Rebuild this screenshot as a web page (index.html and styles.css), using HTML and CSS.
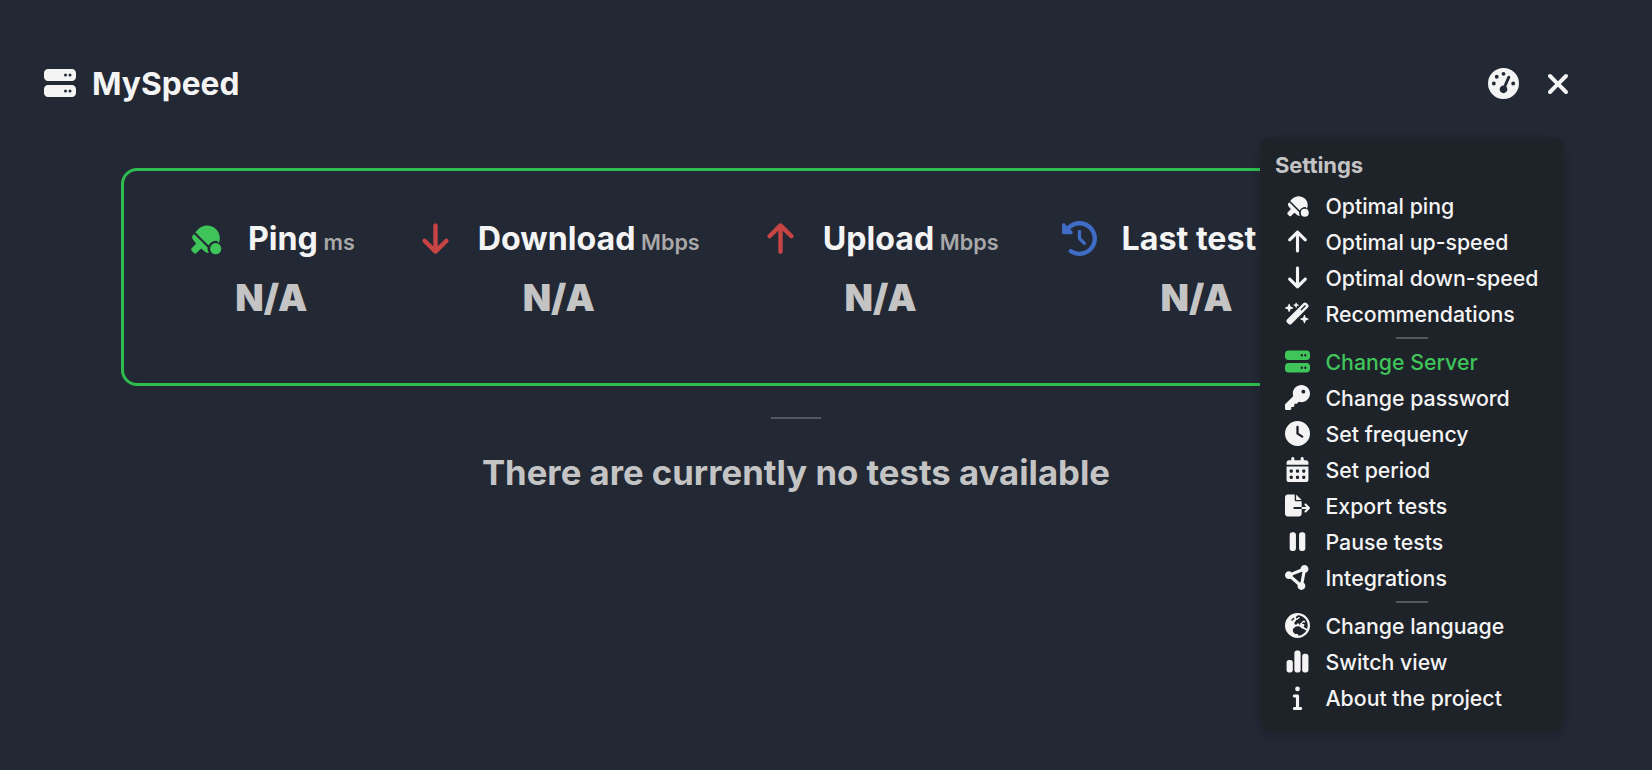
FILE: index.html
```html
<!DOCTYPE html>
<html lang="en">
<head>
<meta charset="utf-8">
<title>MySpeed</title>
<link rel="stylesheet" href="styles.css">
</head>
<body>
<svg class="defs" aria-hidden="true">
<defs>
<symbol id="i-server" viewBox="0 0 512 512"><path d="M64 32C28.7 32 0 60.7 0 96v64c0 35.3 28.7 64 64 64H448c35.3 0 64-28.7 64-64V96c0-35.3-28.7-64-64-64H64zm280 72a24 24 0 1 1 0 48 24 24 0 1 1 0-48zm48 24a24 24 0 1 1 48 0 24 24 0 1 1 -48 0zM64 288c-35.3 0-64 28.7-64 64v64c0 35.3 28.7 64 64 64H448c35.3 0 64-28.7 64-64V352c0-35.3-28.7-64-64-64H64zm280 72a24 24 0 1 1 0 48 24 24 0 1 1 0-48zm48 24a24 24 0 1 1 48 0 24 24 0 1 1 -48 0z"/></symbol>
<symbol id="i-up" viewBox="0 0 512 512"><path transform="translate(64 0)" d="M214.6 41.4c-12.5-12.5-32.8-12.5-45.3 0l-160 160c-12.5 12.5-12.5 32.8 0 45.3s32.8 12.5 45.3 0L160 141.2V448c0 17.7 14.3 32 32 32s32-14.3 32-32V141.2L329.4 246.6c12.5 12.5 32.8 12.5 45.3 0s12.5-32.8 0-45.3l-160-160z"/></symbol>
<symbol id="i-down" viewBox="0 0 512 512"><path transform="translate(64 0)" d="M169.4 470.6c12.5 12.5 32.8 12.5 45.3 0l160-160c12.5-12.5 12.5-32.8 0-45.3s-32.8-12.5-45.3 0L224 370.8V64c0-17.7-14.3-32-32-32s-32 14.3-32 32V370.7L54.6 265.4c-12.5-12.5-32.8-12.5-45.3 0s-12.5 32.8 0 45.3l160 160z"/></symbol>
<symbol id="i-x" viewBox="0 0 384 512"><path d="M342.6 150.6c12.5-12.5 12.5-32.8 0-45.3s-32.8-12.5-45.3 0L192 210.7 86.6 105.4c-12.5-12.5-32.8-12.5-45.3 0s-12.5 32.8 0 45.3L146.7 256 41.4 361.4c-12.5 12.5-12.5 32.8 0 45.3s32.8 12.5 45.3 0L192 301.3 297.4 406.6c12.5 12.5 32.8 12.5 45.3 0s12.5-32.8 0-45.3L237.3 256 342.6 150.6z"/></symbol>
<symbol id="i-gauge" viewBox="0 0 512 512"><path d="M0 256a256 256 0 1 1 512 0A256 256 0 1 1 0 256zM288 96a32 32 0 1 0 -64 0 32 32 0 1 0 64 0zM256 416c35.3 0 64-28.7 64-64c0-17.4-6.9-33.1-18.1-44.6L366 161.7c5.3-12.1-.2-26.3-12.3-31.6s-26.3 .2-31.6 12.3L257.9 288c-.6 0-1.3 0-1.9 0c-35.3 0-64 28.7-64 64s28.7 64 64 64zM176 144a32 32 0 1 0 -64 0 32 32 0 1 0 64 0zM96 288a32 32 0 1 0 0-64 32 32 0 1 0 0 64zm352-32a32 32 0 1 0 -64 0 32 32 0 1 0 64 0z"/></symbol>
<symbol id="i-ping" viewBox="0 0 512 512"><path d="M416 288c-50.1 0-93.6 28.8-114.6 70.8L106 163l43-43c72-72 190-72 262 0c56 56 69 138 39 206C436 297 426 288 416 288z"/><path d="M88 190L287 389c-1 9-1 18 0 27c2 20 9 38 20 52c-20 2-40-5-58-19l-56-46-70 66c-10 10-26 10-36 0l-33-33c-10-10-10-26 0-36l66-70-46-56c-20-26-21-58 14-84z"/><circle cx="405" cy="405" r="82"/></symbol>
<symbol id="i-wand" viewBox="0 0 576 512"><path d="M234.7 42.7L197 56.8c-3 1.1-5 4-5 7.2s2 6.1 5 7.2l37.7 14.1L248.8 123c1.1 3 4 5 7.2 5s6.1-2 7.2-5l14.1-37.7L315 71.2c3-1.1 5-4 5-7.2s-2-6.1-5-7.2L277.3 42.7 263.2 5c-1.1-3-4-5-7.2-5s-6.1 2-7.2 5L234.7 42.7zM46.1 395.4c-18.7 18.7-18.7 49.1 0 67.9l34.6 34.6c18.7 18.7 49.1 18.7 67.9 0L529.9 116.5c18.7-18.7 18.7-49.1 0-67.9L495.3 14.1c-18.7-18.7-49.1-18.7-67.9 0L46.1 395.4zM484.6 82.6l-105 105-23.3-23.3 105-105 23.3 23.3zM7.5 117.2C3 118.9 0 123.2 0 128s3 9.1 7.5 10.8L64 160l21.2 56.5c1.7 4.5 6 7.5 10.8 7.5s9.1-3 10.8-7.5L128 160l56.5-21.2c4.5-1.7 7.5-6 7.5-10.8s-3-9.1-7.5-10.8L128 96 106.8 39.5C105.1 35 100.8 32 96 32s-9.1 3-10.8 7.5L64 96 7.5 117.2zm352 256c-4.5 1.7-7.5 6-7.5 10.8s3 9.1 7.5 10.8L416 416l21.2 56.5c1.7 4.5 6 7.5 10.8 7.5s9.1-3 10.8-7.5L480 416l56.5-21.2c4.5-1.7 7.5-6 7.5-10.8s-3-9.1-7.5-10.8L480 352l-21.2-56.5c-1.7-4.5-6-7.5-10.8-7.5s-9.1 3-10.8 7.5L416 352l-56.5 21.2z"/></symbol>
<symbol id="i-key" viewBox="0 0 512 512"><path d="M336 352c97.2 0 176-78.8 176-176S433.2 0 336 0S160 78.8 160 176c0 18.7 2.9 36.8 8.3 53.7L7 391c-4.5 4.5-7 10.6-7 17v80c0 13.3 10.7 24 24 24h80c13.3 0 24-10.7 24-24V448h40c13.3 0 24-10.7 24-24V384h40c6.4 0 12.5-2.5 17-7l33.3-33.3c16.9 5.4 35 8.3 53.7 8.3zM376 96a40 40 0 1 1 0 80 40 40 0 1 1 0-80z"/></symbol>
<symbol id="i-clock" viewBox="0 0 512 512"><path d="M256 0a256 256 0 1 1 0 512A256 256 0 1 1 256 0zM232 120V256c0 8 4 15.5 10.7 20l96 64c11 7.4 25.9 4.4 33.3-6.7s4.4-25.9-6.7-33.3L280 243.2V120c0-13.3-10.7-24-24-24s-24 10.7-24 24z"/></symbol>
<symbol id="i-cal" viewBox="0 0 448 512"><path d="M128 0c17.7 0 32 14.3 32 32V64H288V32c0-17.7 14.3-32 32-32s32 14.3 32 32V64h48c26.5 0 48 21.5 48 48v48H0V112C0 85.5 21.5 64 48 64H96V32c0-17.7 14.3-32 32-32zM0 192H448V464c0 26.5-21.5 48-48 48H48c-26.5 0-48-21.5-48-48V192zm64 80v32c0 8.8 7.2 16 16 16h32c8.8 0 16-7.2 16-16V272c0-8.8-7.2-16-16-16H80c-8.8 0-16 7.2-16 16zm128 0v32c0 8.8 7.2 16 16 16h32c8.8 0 16-7.2 16-16V272c0-8.8-7.2-16-16-16H208c-8.8 0-16 7.2-16 16zm144-16c-8.8 0-16 7.2-16 16v32c0 8.8 7.2 16 16 16h32c8.8 0 16-7.2 16-16V272c0-8.8-7.2-16-16-16H336zM64 400v32c0 8.8 7.2 16 16 16h32c8.8 0 16-7.2 16-16V400c0-8.8-7.2-16-16-16H80c-8.8 0-16 7.2-16 16zm144-16c-8.8 0-16 7.2-16 16v32c0 8.8 7.2 16 16 16h32c8.8 0 16-7.2 16-16V400c0-8.8-7.2-16-16-16H208zm112 16v32c0 8.8 7.2 16 16 16h32c8.8 0 16-7.2 16-16V400c0-8.8-7.2-16-16-16H336c-8.8 0-16 7.2-16 16z"/></symbol>
<symbol id="i-file" viewBox="0 0 576 512"><path d="M0 64C0 28.7 28.7 0 64 0H224V128c0 17.7 14.3 32 32 32H384V288H216c-13.3 0-24 10.7-24 24s10.7 24 24 24H384V448c0 35.3-28.7 64-64 64H64c-35.3 0-64-28.7-64-64V64zM384 336V288H494.1l-39-39c-9.4-9.4-9.4-24.6 0-33.9s24.6-9.4 33.9 0l80 80c9.4 9.4 9.4 24.6 0 33.9l-80 80c-9.4 9.4-24.6 9.4-33.9 0s-9.4-24.6 0-33.9l39-39H384zm0-208H256V0L384 128z"/></symbol>
<symbol id="i-pause" viewBox="0 0 512 512"><path transform="translate(96 0)" d="M48 64C21.5 64 0 85.5 0 112V400c0 26.5 21.5 48 48 48H80c26.5 0 48-21.5 48-48V112c0-26.5-21.5-48-48-48H48zm192 0c-26.5 0-48 21.5-48 48V400c0 26.5 21.5 48 48 48h32c26.5 0 48-21.5 48-48V112c0-26.5-21.5-48-48-48H240z"/></symbol>
<symbol id="i-nodes" viewBox="0 0 512 512"><path d="M418.4 157.9c35.3-8.3 61.6-40 61.6-77.9c0-44.2-35.8-80-80-80c-43.4 0-78.7 34.5-80 77.5L136.2 151.1C121.7 136.8 101.9 128 80 128c-44.2 0-80 35.8-80 80s35.8 80 80 80c12.2 0 23.8-2.7 34.1-7.6L259.7 407.8c-2.4 7.6-3.7 15.8-3.7 24.2c0 44.2 35.8 80 80 80s80-35.8 80-80c0-27.7-14-52.1-35.4-66.4l37.8-207.7zM156.3 232.2c2.2-6.9 3.5-14.2 3.7-21.7l183.8-73.5c3.6 3.5 7.4 6.7 11.6 9.5L317.6 354.1c-5.5 1.3-10.8 3.1-15.8 5.5L156.3 232.2z"/></symbol>
<symbol id="i-globe" viewBox="0 0 512 512"><path fill-rule="evenodd" d="M266.3 48.3L232.5 73.6c-5.4 4-8.5 10.4-8.5 17.1v9.1c0 6.8 5.5 12.3 12.3 12.3c2.4 0 4.8-.7 6.8-2.1l41.8-27.9c2-1.3 4.4-2.1 6.8-2.1h1c6.2 0 11.3 5.1 11.3 11.3c0 3-1.2 5.9-3.3 8l-19.9 19.9c-5.8 5.8-12.9 10.2-20.7 12.8l-26.5 8.8c-5.8 1.9-9.6 7.3-9.6 13.4c0 3.7-1.5 7.3-4.1 10l-17.9 17.9c-6.4 6.4-9.9 15-9.9 24v4.3c0 16.4 13.6 29.7 29.9 29.7c11 0 21.2-6.2 26.1-16l4-8.1c2.4-4.8 7.4-7.9 12.8-7.9c4.5 0 8.7 2.1 11.4 5.7l16.3 21.7c2.1 2.9 5.5 4.5 9.1 4.5c8.4 0 13.9-8.9 10.1-16.4l-1.1-2.3c-3.5-7 0-15.5 7.5-18l21.2-7.1c7.6-2.5 12.7-9.6 12.7-17.6c0-10.3 8.3-18.6 18.6-18.6H400c8.8 0 16 7.2 16 16s-7.2 16-16 16H379.3c-7.2 0-14.2 2.9-19.3 8l-4.7 4.7c-2.1 2.1-3.3 5-3.3 8c0 6.2 5.1 11.3 11.3 11.3h11.3c6 0 11.8 2.4 16 6.6l6.5 6.5c1.8 1.8 2.8 4.3 2.8 6.8s-1 5-2.8 6.8l-7.5 7.5C386 262 384 266.9 384 272s2 10 5.7 13.7L408 304c10.2 10.2 24.1 16 38.6 16H454c6.5-20.2 10-41.7 10-64c0-111.4-87.6-202.4-197.7-207.7zm172 307.9c-3.7-2.6-8.2-4.1-13-4.1c-6 0-11.8-2.4-16-6.6L396 332c-7.7-7.7-18-12-28.9-12c-9.7 0-19.2-3.5-26.6-9.8L314 287.4c-11.6-9.9-26.4-15.4-41.7-15.4H251.4c-12.6 0-25 3.7-35.5 10.7L188.5 301c-17.8 11.9-28.5 31.9-28.5 53.3v3.2c0 17 6.7 33.3 18.7 45.3l16 16c8.5 8.5 20 13.3 32 13.3H248c13.3 0 24 10.7 24 24c0 2.5 .4 5 1.1 7.3c71.3-5.8 132.5-47.6 165.2-107.2zM0 256a256 256 0 1 1 512 0A256 256 0 1 1 0 256zM187.3 100.7c-6.2-6.2-16.4-6.2-22.6 0l-32 32c-6.2 6.2-6.2 16.4 0 22.6s16.4 6.2 22.6 0l32-32c6.2-6.2 6.2-16.4 0-22.6z"/></symbol>
<symbol id="i-chart" viewBox="0 0 448 512"><path d="M160 80c0-26.5 21.5-48 48-48h32c26.5 0 48 21.5 48 48V432c0 26.5-21.5 48-48 48H208c-26.5 0-48-21.5-48-48V80zM0 272c0-26.5 21.5-48 48-48H80c26.5 0 48 21.5 48 48V432c0 26.5-21.5 48-48 48H48c-26.5 0-48-21.5-48-48V272zM368 96h32c26.5 0 48 21.5 48 48V432c0 26.5-21.5 48-48 48H368c-26.5 0-48-21.5-48-48V144c0-26.5 21.5-48 48-48z"/></symbol>
<symbol id="i-info" viewBox="0 0 192 512"><path d="M48 80a48 48 0 1 1 96 0A48 48 0 1 1 48 80zM0 224c0-17.7 14.3-32 32-32H96c17.7 0 32 14.3 32 32V448h32c17.7 0 32 14.3 32 32s-14.3 32-32 32H32c-17.7 0-32-14.3-32-32s14.3-32 32-32H64V256H32c-17.7 0-32-14.3-32-32z"/></symbol>
<symbol id="i-history" viewBox="0 0 512 512"><path d="M75 75L41 41C25.9 25.9 0 36.6 0 57.9V168c0 13.3 10.7 24 24 24H134.1c21.4 0 32.1-25.9 17-41l-30.8-30.8C155 85.5 203 64 256 64c106 0 192 86 192 192s-86 192-192 192c-40.8 0-78.6-12.7-109.7-34.4c-14.5-10.1-34.4-6.6-44.6 7.9s-6.6 34.4 7.9 44.6C151.2 495 201.7 512 256 512c141.4 0 256-114.6 256-256S397.4 0 256 0C185.3 0 121.3 28.7 75 75zm181 53c-13.3 0-24 10.7-24 24V256c0 6.4 2.5 12.5 7 17l72 72c9.4 9.4 24.6 9.4 33.9 0s9.4-24.6 0-33.9l-65-65V152c0-13.3-10.7-24-24-24z"/></symbol>
</defs>
</svg>
<div class="page">
  <header class="top">
    <div class="brand">
      <svg class="brand-icon"><use href="#i-server"/></svg>
      <h1 class="brand-name">MySpeed</h1>
    </div>
    <div class="top-actions">
      <svg class="gauge"><use href="#i-gauge"/></svg>
      <svg class="close"><use href="#i-x"/></svg>
    </div>
  </header>

  <section class="card">
    <div class="stat">
      <div class="stat-head"><svg class="stat-icon green"><use href="#i-ping"/></svg><span class="stat-title">Ping</span><span class="stat-unit">ms</span></div>
      <div class="stat-value">N/A</div>
    </div>
    <div class="stat">
      <div class="stat-head"><svg class="stat-icon red"><use href="#i-down"/></svg><span class="stat-title">Download</span><span class="stat-unit">Mbps</span></div>
      <div class="stat-value">N/A</div>
    </div>
    <div class="stat">
      <div class="stat-head"><svg class="stat-icon red"><use href="#i-up"/></svg><span class="stat-title">Upload</span><span class="stat-unit">Mbps</span></div>
      <div class="stat-value">N/A</div>
    </div>
    <div class="stat stat-last">
      <div class="stat-head"><svg class="stat-icon blue"><use href="#i-history"/></svg><span class="stat-title">Last test</span></div>
      <div class="stat-value">N/A</div>
    </div>
  </section>

  <div class="rule"></div>
  <h2 class="empty">There are currently no tests available</h2>

  <nav class="menu">
    <div class="menu-title">Settings</div>
    <div class="menu-row"><svg class="menu-icon"><use href="#i-ping"/></svg><span>Optimal ping</span></div>
    <div class="menu-row"><svg class="menu-icon"><use href="#i-up"/></svg><span>Optimal up-speed</span></div>
    <div class="menu-row"><svg class="menu-icon"><use href="#i-down"/></svg><span>Optimal down-speed</span></div>
    <div class="menu-row"><svg class="menu-icon"><use href="#i-wand"/></svg><span>Recommendations</span></div>
    <div class="menu-sep"></div>
    <div class="menu-row active"><svg class="menu-icon"><use href="#i-server"/></svg><span>Change Server</span></div>
    <div class="menu-row"><svg class="menu-icon"><use href="#i-key"/></svg><span>Change password</span></div>
    <div class="menu-row"><svg class="menu-icon"><use href="#i-clock"/></svg><span>Set frequency</span></div>
    <div class="menu-row"><svg class="menu-icon"><use href="#i-cal"/></svg><span>Set period</span></div>
    <div class="menu-row"><svg class="menu-icon"><use href="#i-file"/></svg><span>Export tests</span></div>
    <div class="menu-row"><svg class="menu-icon"><use href="#i-pause"/></svg><span>Pause tests</span></div>
    <div class="menu-row"><svg class="menu-icon"><use href="#i-nodes"/></svg><span>Integrations</span></div>
    <div class="menu-sep"></div>
    <div class="menu-row"><svg class="menu-icon"><use href="#i-globe"/></svg><span>Change language</span></div>
    <div class="menu-row"><svg class="menu-icon"><use href="#i-chart"/></svg><span>Switch view</span></div>
    <div class="menu-row"><svg class="menu-icon"><use href="#i-info"/></svg><span>About the project</span></div>
  </nav>
</div>
</body>
</html>
```
FILE: styles.css
```css
* { box-sizing: border-box; }
html, body { margin: 0; height: 100%; }
body {
  background: #222834;
  color: #f4f4f4;
  font-family: Inter, "Liberation Sans", sans-serif;
  overflow: hidden;
}
.defs { position: absolute; width: 0; height: 0; }
.page {
  position: relative;
  height: 770px;
  display: flex;
  flex-direction: column;
  padding: 67px 82px 0 44px;
}
svg { fill: currentColor; display: block; flex: none; }
.top {
  display: flex;
  align-items: center;
  justify-content: space-between;
  height: 32px;
}
.brand { display: flex; align-items: center; gap: 16px; }
.brand-icon { width: 32px; height: 32px; }
.brand-name { margin: 1px 0 0; font-size: 31.7px; line-height: 32px; font-weight: 700; }
.top-actions { display: flex; align-items: center; gap: 27px; }
.gauge { width: 31px; height: 31px; margin-top: 1px; }
.close { width: 24px; height: 32px; margin-top: 1px; }
.card {
  margin: 69px 0 0 77px;
  width: 1350px;
  height: 218px;
  border: 3px solid #30bd4f;
  border-radius: 16px;
  padding: 47px 0 0 64px;
  display: flex;
  gap: 63px;
  align-items: flex-start;
}
.stat { display: flex; flex-direction: column; align-items: center; }
.stat-last { width: 270px; align-items: center; }
.stat-last .stat-head { align-self: flex-start; }
.stat-head { display: flex; align-items: center; height: 40px; }
.stat-icon { width: 35px; height: 35px; margin-right: 25px; }
.green { color: #3fc45a; }
.red { color: #c84444; }
.blue { color: #3f6cc4; }
.stat-title { font-size: 32.2px; font-weight: 700; white-space: nowrap; }
.stat-unit { font-size: 21.6px; font-weight: 600; color: #a9a9a9; margin: 7px 0 0 5.5px; }
.stat-value { font-size: 37px; font-weight: 900; color: #c4c4c4; line-height: 48px; margin-top: 16px; }
.rule {
  width: 50px;
  height: 2px;
  background: #55585f;
  margin: 31px 0 0 727px;
}
.empty {
  margin: 31px 0 0;
  width: 1504px;
  text-align: center;
  font-size: 34.7px;
  line-height: 44px;
  font-weight: 700;
  color: #c4c4c4;
}
.menu {
  position: absolute;
  top: 137px;
  left: 1260px;
  width: 304px;
  height: 595px;
  background: #1e2229;
  border-radius: 12px;
  padding: 14px 16px;
  box-shadow: 0 4px 12px rgba(0, 0, 0, 0.12);
}
.menu-title { font-size: 22px; font-weight: 700; color: #c4c4c4; line-height: 28px; margin-bottom: 8.5px; margin-left: -1px; letter-spacing: -0.1px; }
.menu-row { display: flex; align-items: center; height: 36px; gap: 15.5px; padding-left: 9px; font-size: 21.3px; font-weight: 500; white-space: nowrap; }
.menu-row.active { color: #3fc45a; }
.menu-icon { width: 25px; height: 25px; }
.menu-sep { width: 32px; height: 2px; background: #55585f; margin: 5px auto; }
```
